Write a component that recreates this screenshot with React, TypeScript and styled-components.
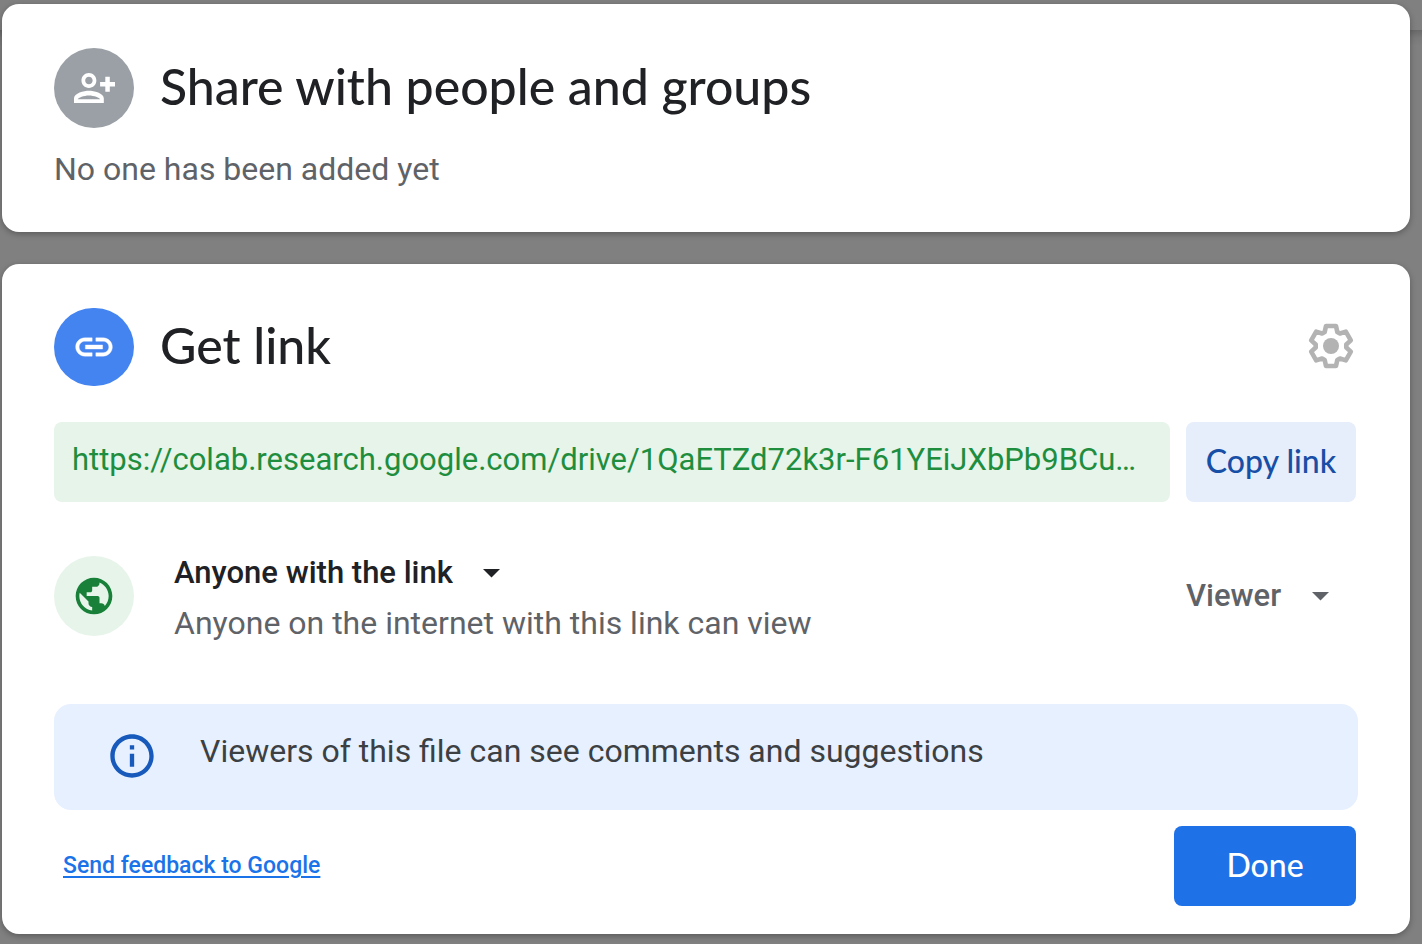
import React from "react";
import styled, { createGlobalStyle } from "styled-components";

const GlobalStyle = createGlobalStyle`
  *, *::before, *::after { box-sizing: border-box; }
  body {
    margin: 0;
    background: #808080;
    font-family: Roboto, "Liberation Sans", sans-serif;
    -webkit-font-smoothing: antialiased;
  }
`;

const display = `Lato, Roboto, sans-serif`;

const Page = styled.main`
  display: flex;
  flex-direction: column;
  gap: 32px;
  min-height: 100vh;
  padding: 4px 12px 10px 2px;
  background: linear-gradient(
    #808080 0,
    #808080 30px,
    #696969 30px,
    #7a7a7a 38px,
    #808080 46px
  );
`;

const Card = styled.section<{ $bottom: number }>`
  display: flex;
  flex-direction: column;
  padding: 44px 52px ${(p) => p.$bottom}px;
  border-radius: 17px;
  background: #fff;
  box-shadow: 0 2px 6px rgba(0, 0, 0, 0.3);
`;

const Heading = styled.header`
  display: flex;
  align-items: center;
  gap: 26px;
  padding-right: 2px;
`;

const Title = styled.h2`
  flex: 1;
  margin: 0;
  padding-bottom: 4px;
  color: #202124;
  font: 500 50px/64px ${display};
`;

const Badge = styled.span<{ $bg: string; $height?: number }>`
  display: flex;
  flex: none;
  align-items: center;
  justify-content: center;
  width: 80px;
  height: ${(p) => p.$height ?? 80}px;
  border-radius: 40px;
  background: ${(p) => p.$bg};
`;

const Muted = styled.p`
  margin: 0;
  color: #5f6368;
  font-size: 32px;
  line-height: 40px;
`;

const EmptyNote = styled(Muted)`
  margin-top: 21px;
`;

const GearButton = styled.button`
  display: flex;
  margin: 0;
  padding: 0 0 2px;
  border: 0;
  background: none;
`;

const LinkRow = styled.div`
  display: flex;
  gap: 16px;
  margin-top: 36px;
  padding-right: 2px;
`;

const LinkField = styled.input`
  flex: 1;
  min-width: 0;
  height: 80px;
  padding: 0 10px 6px 18px;
  border: 0;
  border-radius: 8px;
  outline: 0;
  background: #e6f4ea;
  color: #1e8e3e;
  font: 400 31px/40px Roboto, sans-serif;
  text-overflow: ellipsis;
`;

const Button = styled.button<{ $primary?: boolean }>`
  flex: none;
  width: ${(p) => (p.$primary ? 182 : 170)}px;
  height: 80px;
  padding: 0 0 2px;
  border: 0;
  border-radius: 8px;
  background: ${(p) => (p.$primary ? "#1f71e7" : "#e6edfb")};
  color: ${(p) => (p.$primary ? "#fff" : "#174ea6")};
  font: 500 32px/40px ${display};
`;

const AccessRow = styled.div`
  display: flex;
  align-items: center;
  height: 96px;
  margin: 46px 0 60px;
  padding-right: 29px;
`;

const AccessText = styled.div`
  display: flex;
  flex: 1;
  flex-direction: column;
  gap: 10px;
  padding: 4px 0 0 40px;
`;

const Picker = styled.label<{ $color: string }>`
  display: flex;
  align-items: center;
  gap: 30px;
  color: ${(p) => p.$color};
`;

const Select = styled.select`
  appearance: none;
  height: 40px;
  margin: 0;
  padding: 0;
  border: 0;
  outline: 0;
  background: none;
  color: inherit;
  font: 500 31px/40px Roboto, sans-serif;
`;

const Notice = styled.div`
  display: flex;
  align-items: center;
  gap: 42px;
  height: 106px;
  padding: 0 0 2px 52px;
  border-radius: 17px;
  background: #e6f0ff;
`;

const NoticeText = styled.p`
  margin: 0;
  padding-bottom: 10px;
  color: #3c4043;
  font-size: 32px;
  line-height: 40px;
`;

const Footer = styled.footer`
  display: flex;
  align-items: center;
  justify-content: space-between;
  margin-top: 16px;
  padding: 0 2px 0 9px;
`;

const FeedbackLink = styled.a`
  color: #1a73e8;
  font-size: 23px;
  font-weight: 500;
  line-height: 32px;
  text-decoration: underline;
  text-decoration-thickness: 2px;
  text-underline-offset: 3px;
`;

const Caret = () => (
  <svg width="17" height="9" viewBox="0 0 17 9" aria-hidden="true">
    <path d="M0 0h17L8.500 8.500z" fill="currentColor" />
  </svg>
);

const PersonAddIcon = () => (
  <svg width="41" height="30" viewBox="4 4 22 16" fill="#fff" aria-hidden="true">
    <path d="M12 6c1.100 0 2 .9 2 2s-.9 2-2 2-2-.9-2-2 .9-2 2-2m0 10c2.700 0 5.800 1.290 6 2H6c.23-.72 3.310-2 6-2m0-12C9.790 4 8 5.790 8 8s1.790 4 4 4 4-1.790 4-4-1.790-4-4-4zm0 9.500c-2.670 0-8 1.340-8 4V20h16v-2.500c0-2.660-5.330-4-8-4z" />
    <path d="M20.800 6h2.400v2.800H26v2.400h-2.800V14h-2.400v-2.800H18V8.800h2.800z" />
  </svg>
);

const LinkIcon = () => (
  <svg width="44" height="44" viewBox="0 0 24 24" fill="#fff" aria-hidden="true">
    <path d="M3.900 12c0-1.710 1.390-3.100 3.100-3.100h4V7H7c-2.760 0-5 2.240-5 5s2.240 5 5 5h4v-1.900H7c-1.710 0-3.100-1.390-3.100-3.100zM7.300 13.100h9.400v-2.200H7.300v2.200zm9.700-6.100h-4v1.900h4c1.710 0 3.100 1.390 3.100 3.100s-1.390 3.100-3.100 3.100h-4V17h4c2.760 0 5-2.240 5-5s-2.240-5-5-5z" stroke="#fff" strokeWidth="0.200" />
  </svg>
);

const GearIcon = () => (
  <svg width="50" height="50" viewBox="-25 -25 50 50" aria-hidden="true">
    <path
      d="M-6.300-14L-5-20H5L6.300-14L8.970-12.460L14.820-14.330L19.820-5.670L15.270-1.540V1.540L19.820 5.670L14.820 14.330L8.970 12.460L6.300 14L5 20H-5L-6.300 14L-8.970 12.460L-14.820 14.330L-19.820 5.670L-15.270 1.540V-1.540L-19.820-5.670L-14.820-14.330L-8.970-12.460z"
      fill="none"
      stroke="#b3b3b3"
      strokeWidth="4.600"
      strokeLinejoin="round"
    />
    <circle r="8" fill="#b3b3b3" />
  </svg>
);

const GlobeIcon = () => (
  <svg width="44" height="44" viewBox="0 0 24 24" fill="#188038" aria-hidden="true">
    <path d="M12 2C6.480 2 2 6.480 2 12s4.480 10 10 10 10-4.480 10-10S17.520 2 12 2zm-1 17.930c-3.950-.49-7-3.850-7-7.930 0-.62.08-1.210.21-1.790L9 15v1c0 1.100.9 2 2 2v1.930zm6.900-2.540c-.26-.81-1-1.390-1.900-1.390h-1v-3c0-.55-.45-1-1-1H8v-2h2c.55 0 1-.45 1-1V7h2c1.100 0 2-.9 2-2v-.41c2.930 1.190 5 4.060 5 7.410 0 2.080-.8 3.970-2.100 5.390z" />
  </svg>
);

const InfoIcon = () => (
  <svg width="52" height="52" viewBox="0 0 24 24" fill="#185abc" aria-hidden="true">
    <path d="M11 7h2v2h-2zm0 4h2v6h-2zm1-9C6.480 2 2 6.480 2 12s4.480 10 10 10 10-4.480 10-10S17.520 2 12 2zm0 18c-4.410 0-8-3.590-8-8s3.590-8 8-8 8 3.590 8 8-3.590 8-8 8z" />
  </svg>
);

export default function App() {
  return (
    <>
      <GlobalStyle />
      <Page>
        <Card $bottom={43}>
          <Heading>
            <Badge $bg="#9aa0a6">
              <PersonAddIcon />
            </Badge>
            <Title>Share with people and groups</Title>
          </Heading>
          <EmptyNote>No one has been added yet</EmptyNote>
        </Card>

        <Card $bottom={28}>
          <Heading>
            <Badge $bg="#4484f0" $height={78}>
              <LinkIcon />
            </Badge>
            <Title>Get link</Title>
            <GearButton type="button" aria-label="Settings">
              <GearIcon />
            </GearButton>
          </Heading>

          <LinkRow>
            <LinkField
              readOnly
              aria-label="Link"
              defaultValue="https://colab.research.google.com/drive/1QaETZd72k3r-F61YEiJXbPb9BCuWm4xT?usp=sharing"
            />
            <Button type="button">Copy link</Button>
          </LinkRow>

          <AccessRow>
            <Badge $bg="#e6f4ea">
              <GlobeIcon />
            </Badge>
            <AccessText>
              <Picker $color="#202124">
                <Select aria-label="General access">
                  <option>Anyone with the link</option>
                </Select>
                <Caret />
              </Picker>
              <Muted>Anyone on the internet with this link can view</Muted>
            </AccessText>
            <Picker $color="#5f6368">
              <Select aria-label="Role">
                <option>Viewer</option>
              </Select>
              <Caret />
            </Picker>
          </AccessRow>

          <Notice>
            <InfoIcon />
            <NoticeText>Viewers of this file can see comments and suggestions</NoticeText>
          </Notice>

          <Footer>
            <FeedbackLink href="#feedback">Send feedback to Google</FeedbackLink>
            <Button type="button" $primary>
              Done
            </Button>
          </Footer>
        </Card>
      </Page>
    </>
  );
}
